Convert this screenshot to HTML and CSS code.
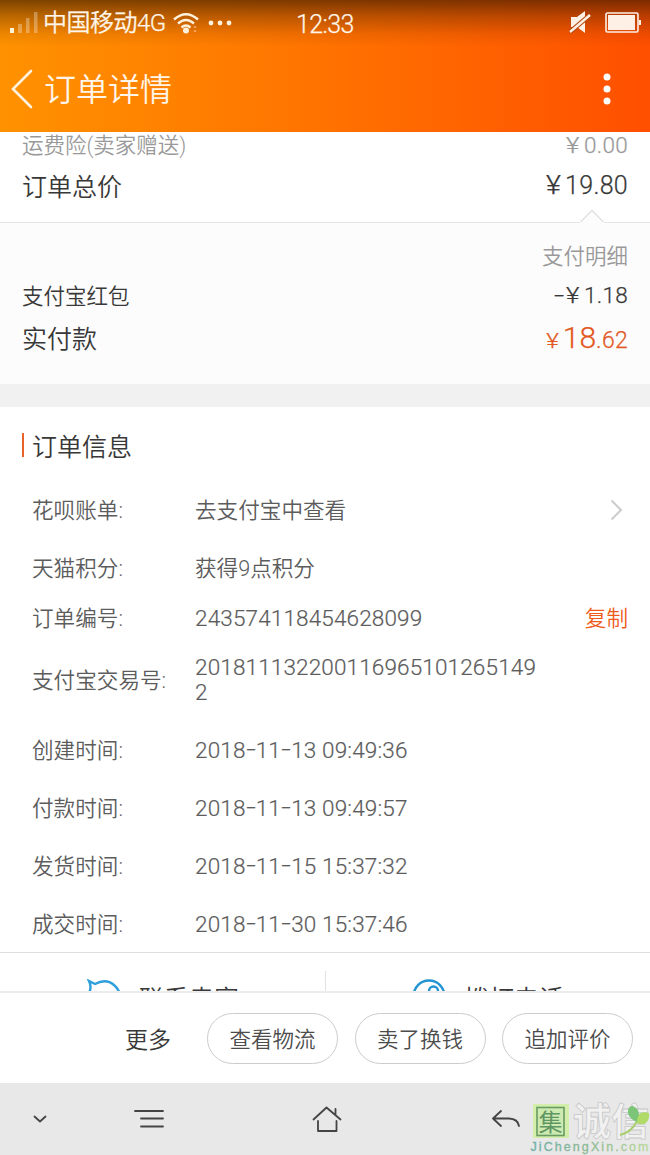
FILE: index.html
```html
<!DOCTYPE html>
<html lang="zh-CN">
<head>
<meta charset="utf-8">
<title>订单详情</title>
<link rel="stylesheet" href="styles.css">
</head>
<body>
<div class="screen">
  <header class="top">
    <div class="status">
      <svg class="signal" width="28" height="24" viewBox="0 0 28 24"><rect x="0" y="17" width="4" height="5" fill="#fff3d8"/><g fill="#fff" fill-opacity=".3"><rect x="8" y="13" width="4" height="9"/><rect x="16" y="7" width="3.5" height="15"/><rect x="24" y="1" width="3.5" height="21"/></g></svg>
      <span class="carrier">中国移动4G</span>
      <svg class="wifi" width="26" height="22" viewBox="0 0 26 22" fill="none" stroke="#fff1dc" stroke-width="2.4"><path d="M1 7.5Q13-3 25 7.5M5 11.5Q13 4.500 21 11.500M8.500 15.500Q13 11.500 17.500 15.500"/><circle cx="13" cy="18.500" r="3" fill="#fff1dc" stroke="none"/><path d="M22 14v2M22 18v2" stroke-opacity=".4"/></svg>
      <svg class="dots" width="24" height="6" viewBox="0 0 24 6" fill="#fff1dc"><circle cx="3" cy="3" r="2.400"/><circle cx="12" cy="3" r="2.400"/><circle cx="21" cy="3" r="2.400"/></svg>
      <time class="clock">12:33</time>
      <svg class="mute" width="22" height="24" viewBox="0 0 22 24"><path d="M2 7h6l8-6v22l-8-6H2z" fill="#fff0e6"/><path d="M1 22L21 5" stroke="#b54a0c" stroke-width="4.600"/><path d="M1 22L21 5" stroke="#fff0e6" stroke-width="2.400"/></svg>
      <svg class="battery" width="36" height="22" viewBox="0 0 36 22"><rect x="1" y="1" width="32" height="19" rx="1.500" fill="none" stroke="#fff0e6" stroke-width="1.600"/><path d="M3 3h27v15H3z" fill="#fff0e6"/><path d="M34 8h2v5h-2z" fill="#fff0e6"/></svg>
    </div>
    <div class="nav">
      <svg class="back" width="22" height="40" viewBox="0 0 22 40" fill="none" stroke="#fff3e0" stroke-width="2.600" stroke-linecap="round"><path d="M20 2L2 20 20 38"/></svg>
      <h1>订单详情</h1>
      <svg class="kebab" width="8" height="32" viewBox="0 0 8 32" fill="#fff"><circle cx="4" cy="4" r="3.500"/><circle cx="4" cy="16" r="3.500"/><circle cx="4" cy="28" r="3.500"/></svg>
    </div>
  </header>

  <section class="totals">
    <div class="line muted insurance"><span>运费险(卖家赠送)</span><span class="num"><i>¥</i>0.00</span></div>
    <div class="line large total"><span>订单总价</span><span class="num"><i>¥</i>19.80</span></div>
    <svg class="notch" width="24" height="14" viewBox="0 0 24 14"><path d="M0 13L12 1 24 13V14H0z" fill="#fcfcfc"/><path d="M.5 13L12 1.500 23.500 13" fill="none" stroke="#e2e2e2" stroke-width="1.500"/></svg>
  </section>
  <section class="payment">
    <div class="line muted detail"><span></span><span>支付明细</span></div>
    <div class="line coupon"><span>支付宝红包</span><span class="num"><b>-</b><i>¥</i>1.18</span></div>
    <div class="line large paid"><span>实付款</span><span class="num price"><i>¥</i><em>18</em>.62</span></div>
  </section>

  <section class="info">
    <h2>订单信息</h2>
    <dl>
      <div class="row"><dt>花呗账单:</dt><dd>去支付宝中查看</dd><svg class="chevron" width="13" height="22" viewBox="0 0 13 22" fill="none" stroke="#ccc" stroke-width="2"><path d="M1.500 1.500L11 11 1.500 20.500"/></svg></div>
      <div class="row"><dt>天猫积分:</dt><dd>获得9点积分</dd></div>
      <div class="row short"><dt>订单编号:</dt><dd class="digits">243574118454628099</dd><a class="copy">复制</a></div>
      <div class="row tall"><dt>支付宝交易号:</dt><dd class="digits">2018111322001169651012651492</dd></div>
      <div class="row"><dt>创建时间:</dt><dd class="digits">2018<b>-</b>11<b>-</b>13 09:49:36</dd></div>
      <div class="row"><dt>付款时间:</dt><dd class="digits">2018<b>-</b>11<b>-</b>13 09:49:57</dd></div>
      <div class="row"><dt>发货时间:</dt><dd class="digits">2018<b>-</b>11<b>-</b>15 15:37:32</dd></div>
      <div class="row"><dt>成交时间:</dt><dd class="digits">2018<b>-</b>11<b>-</b>30 15:37:46</dd></div>
    </dl>
  </section>

  <section class="contact">
    <div class="way"><svg width="34" height="34" viewBox="0 0 34 34" fill="none" stroke="#2d9fdc" stroke-width="2.400"><path d="M2 14Q5 8 2 2L8 5Q19-1 27 6Q33 11 33 18Q32 32 17 32Q2 32 2 14"/><path d="M16 12v3M23 12v3"/></svg><span>联系卖家</span></div>
    <div class="way"><svg width="34" height="34" viewBox="0 0 34 34" fill="none" stroke="#2294d2" stroke-width="2.400"><circle cx="17" cy="17" r="15.500"/><path d="M17 15V12A4.500 4.500 0 0 1 26 12Q26 24 14 25"/></svg><span>拨打电话</span></div>
  </section>

  <footer class="actions">
    <span class="more">更多</span>
    <button>查看物流</button>
    <button>卖了换钱</button>
    <button>追加评价</button>
  </footer>

  <nav class="system">
    <svg class="sys-down" width="14" height="8" viewBox="0 0 14 8"><path d="M1.500 1.500L7 6.500 12.500 1.500"/></svg>
    <svg class="sys-menu" width="30" height="20" viewBox="0 0 30 20"><path d="M1 2H29M7 9.500H29M7 17.500H29"/></svg>
    <svg class="sys-home" width="30" height="28" viewBox="0 0 30 28"><path d="M1.500 14.500L14.500 2.500 28.500 14.500M23.500 10V4M6 16V26H24.500V16"/></svg>
    <svg class="sys-back" width="30" height="20" viewBox="0 0 30 20"><path d="M10 2L2 9.500 10 17M2.500 9.500H18Q27 10 28 17"/></svg>
    <svg class="brand" width="124" height="54" viewBox="0 0 124 54">
      <defs><linearGradient id="domain" x1="0" x2="1"><stop offset="0" stop-color="#6dafa9"/><stop offset=".5" stop-color="#8cba92"/><stop offset="1" stop-color="#b9d89b"/></linearGradient></defs>
      <rect x="7" y="3" width="36" height="34" fill="#d2eeaa"/><rect x="11" y="6.500" width="27" height="28" fill="#cdeab0" stroke="#699b65" stroke-width="1.600"/>
      <text x="12.500" y="29.500" class="seal">集</text>
      <text x="47" y="34" class="name">诚信</text>
      <path d="M94 34Q106 31 111 20" fill="none" stroke="#a9cf70" stroke-width="2"/>
      <path d="M112 21C102 19 99 8 105 5C112 5 115 13 112 21z" fill="#7cc478"/><path d="M111 22C111 11 117 10 123 12C124 20 119 26 111 22z" fill="#b0db68"/>
      <text x="4.500" y="50" class="domain" textLength="118">JiChengXin.com</text>
    </svg>
  </nav>
</div>
</body>
</html>
```
FILE: styles.css
```css
* { box-sizing: border-box; }
body { margin: 0; background: #fff; font-family: Roboto, "Noto Sans CJK SC", sans-serif; font-weight: 350; color: #383838; }
svg { display: block; flex: none; }
h1, h2, dl, dt, dd { margin: 0; font-weight: 350; }
.screen { width: 650px; height: 1155px; display: flex; flex-direction: column; overflow: hidden; }

.top { height: 132px; flex: none; color: #fff5e8; background: linear-gradient(180deg, rgba(45, 20, 0, .62) 0, rgba(65, 28, 0, .36) 16px, rgba(80, 30, 0, .1) 34px, transparent 46px), linear-gradient(90deg, #ff9200, #ff7200 50%, #ff4f00); }
.status { height: 46px; display: flex; align-items: center; padding-left: 10px; }
.carrier { width: 124px; margin-left: 5px; font-size: 24px; line-height: 30px; white-space: nowrap; letter-spacing: -.5px; }
.wifi { margin-left: 6px; }
.dots { margin-left: 9px; }
.clock { margin-left: 64px; margin-top: 3px; font-size: 25px; line-height: 28px; width: 60px; letter-spacing: -.6px; }
.carrier, .clock { -webkit-text-stroke: .25px currentColor; }
.mute { margin-left: 213px; margin-top: -2px; }
.battery { margin-left: 14px; }
.nav { height: 86px; display: flex; align-items: center; padding: 0 39px 0 11px; }
.nav h1 { flex: 1; font-size: 32px; line-height: 44px; margin-left: 11px; padding-top: 2px; }

.line { display: flex; justify-content: space-between; align-items: center; font-size: 21.5px; height: 40px; line-height: 30px; }
.large { font-size: 25px; }
.muted { color: #999; }
.num { display: flex; align-items: baseline; letter-spacing: .3px; -webkit-text-stroke: .25px currentColor; }
.num i { font-style: normal; margin-right: 5px; transform: scaleX(1.15); }
.num b { font-weight: 300; margin-right: 4px; transform: scaleX(1.6); }
.num em { font-style: normal; font-size: 30px; letter-spacing: 0; }
.totals { position: relative; height: 91px; flex: none; padding: 0 22px; border-bottom: 1px solid #e6e6e6; }
.insurance { height: 28px; }
.insurance .num { padding-bottom: 3px; }
.insurance .num, .coupon .num { font-size: 22.5px; }
.total { height: 55px; }
.total .num { padding-bottom: 3px; }
.notch { position: absolute; right: 46px; bottom: -1px; }
.payment { height: 184px; flex: none; padding: 13px 22px 0; background: #fcfcfc; border-bottom: 23px solid #f1f1f1; }
.detail { height: 42px; }
.coupon { height: 38px; }
.coupon .num { padding-bottom: 4px; }
.paid { height: 48px; }
.price { color: #e2571e; font-size: 23px; padding-bottom: 2px; }
.price i { font-size: 21px; margin-right: 5px; }

.info { height: 545px; flex: none; }
.info h2 { display: flex; align-items: center; height: 74px; padding: 1px 0 0 22px; font-size: 25px; }
.info h2::before { content: ""; width: 2px; height: 24px; margin-right: 8px; background: #e8632b; }
.row { display: grid; grid-template-columns: 163px 345px 1fr; align-items: center; height: 58px; padding: 0 22px 0 32px; font-size: 21.6px; line-height: 25px; color: #5c5c5c; }
.short { height: 42px; }
.tall { height: 82px; }
.digits { font-size: 22.5px; letter-spacing: .15px; word-break: break-all; -webkit-text-stroke: .2px currentColor; }
.digits b { display: inline-block; width: 10.2px; font-weight: 300; text-align: center; transform: translateY(-1px) scaleX(1.5); }
.chevron { justify-self: end; margin-right: 5px; }
.copy { justify-self: end; color: #ee5b1b; }

.contact { height: 39px; flex: none; display: flex; border-top: 1px solid #ddd; overflow: hidden; }
.way { flex: 1; height: 80px; display: flex; padding: 26px 0 0 87px; gap: 18px; font-size: 25px; line-height: 41px; }
.way + .way { padding-left: 86px; border-left: 1px solid #e2e2e2; margin-top: 18px; padding-top: 8px; }

.actions { height: 92px; flex: none; display: flex; align-items: center; padding: 0 17px 0 125px; border-top: 2px solid #ececec; background: #fff; }
.more { width: 82px; flex: none; font-size: 23px; }
.actions button { width: 131px; height: 51px; margin: 0 16.5px 0 0; padding: 0 0 1px; border: 1px solid #ccc; border-radius: 26px; background: #fff; color: #4c4c4c; font: inherit; font-size: 21.5px; flex: none; }
.actions button:last-child { margin-right: 0; }

.system { height: 72px; flex: none; display: flex; align-items: center; background: #e8e8e8; padding-left: 33px; }
.sys-down, .sys-menu, .sys-home, .sys-back { fill: none; stroke: #444; stroke-width: 1.8; stroke-linecap: round; stroke-linejoin: round; }
.sys-menu { margin-left: 87px; }
.sys-home { margin-left: 148px; }
.sys-back { margin-left: 149px; }
.brand { margin-left: 5px; margin-top: 18px; }
.seal { font: 400 24px "Noto Sans CJK SC", sans-serif; fill: #5f9663; }
.name { font: 700 38px "Noto Sans CJK SC", sans-serif; fill: #f1f1f1; stroke: #c8c8c8; stroke-width: .8; }
.domain { font: 400 12.5px "Liberation Sans", sans-serif; fill: url(#domain); stroke: url(#domain); stroke-width: .3; }
```
